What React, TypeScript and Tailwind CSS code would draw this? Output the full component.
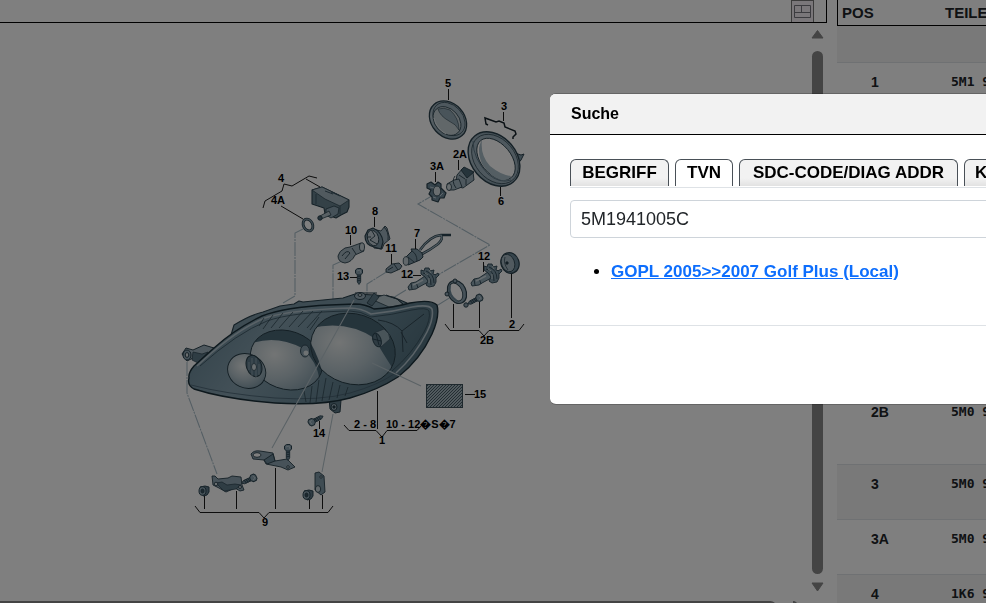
import React from "react";

type Part = { pos: string; code: string; tall?: boolean };

const parts: Part[] = [
  { pos: "1", code: "5M1 941 005 C" },
  { pos: "1", code: "5M1 941 006 C" },
  { pos: "2", code: "5M0 941 607" },
  { pos: "2", code: "5M0 941 608" },
  { pos: "2A", code: "5M0 941 641" },
  { pos: "2A", code: "5M0 941 642" },
  { pos: "2B", code: "5M0 998 225", tall: true },
  { pos: "3", code: "5M0 941 133" },
  { pos: "3A", code: "5M0 941 109" },
  { pos: "4", code: "1K6 941 295" },
];

const labels: [string, number, number][] = [
  ["5", 448, 87], ["3", 504, 110], ["2A", 460, 158], ["3A", 437, 170],
  ["6", 501, 205], ["4", 281, 182], ["4A", 278, 204], ["8", 375, 215],
  ["10", 351, 234], ["7", 417, 237], ["11", 391, 252], ["12", 407, 278],
  ["12", 484, 260], ["13", 343, 280], ["2", 512, 328], ["2B", 487, 344],
  ["15", 480, 398], ["14", 319, 437], ["1", 382, 444], ["9", 265, 526],
];

function Bulb({ x, y }: { x: number; y: number }) {
  return (
    <g transform={`translate(${x} ${y})`} stroke="#2c4552" strokeWidth="0.9" strokeLinejoin="round">
      <path d="M-17 8 L-14 4 L-9 3 L0 -3 L5 2 L-6 8 L-9 10 L-16 11 Z" fill="#93aab7" />
      <path d="M-14 4 L-13 10 M-9 3 L-7 9" fill="none" />
      <path d="M-12 6 L-2 1" stroke="#cddade" strokeWidth="1.4" />
      <path d="M-4 -5 L-4 -9 L-1 -8 L0 -11 L4 -11 L5 -8 L9 -9 L8 -5 L11 -4 L11 3 L9 7 L4 8 L1 6 L3 2 L0 -2 Z" fill="#7b94a2" />
      <path d="M-2 -6 Q6 -5 6 6 M1 -8 Q9 -5 9 4" fill="none" />
      <path d="M10 -4 L13 -6 L14 -4 L11 -1" fill="#7b94a2" />
      <path d="M0 -6 L3 -4 M4 -9 L6 -6 M4 -1 L4 4" stroke="#cddade" />
    </g>
  );
}

function Screw({ x, y, angle }: { x: number; y: number; angle: number }) {
  return (
    <g transform={`translate(${x} ${y}) rotate(${angle})`} stroke="#2c4552">
      <path d="M-1.700 2 H1.700 V10 L0 12.500 L-1.700 10 Z" fill="#6d8797" strokeWidth="0.8" />
      <path d="M-2 5 L2 4 M-2 7 L2 6 M-2 9 L2 8" strokeWidth="0.9" />
      <path d="M-3.500 -2 L-1.500 -3.500 L2 -3.500 L3.500 -2 L3.500 1 L1.500 3 L-1.500 3 L-3.500 1 Z" fill="#8aa2b0" />
      <path d="M-2 -1 L1 -2 L2 1" fill="none" stroke="#c4d3da" strokeWidth="0.8" />
    </g>
  );
}

function Nut({ x, y }: { x: number; y: number }) {
  return (
    <g transform={`translate(${x} ${y})`} stroke="#2c4552">
      <path d="M-4 -4 L1 -5 L5 -4 L5 1 L3 4 L-1 5 Z" fill="#5f7888" />
      <ellipse cx="-1.500" cy="0" rx="3.500" ry="4.300" fill="#8ea5b2" />
      <ellipse cx="-1.500" cy="0" rx="1.500" ry="2" fill="#3a525f" />
    </g>
  );
}

function Diagram() {
  return (
    <svg
      className="block h-[460px] w-[360px] shrink-0"
      viewBox="180 70 360 460"
      role="img"
      aria-label="Headlamp parts"
    >
      <defs>
        <linearGradient id="body" x1="0" y1="0" x2="1" y2="0.3">
          <stop offset="0" stopColor="#5f7f8f" />
          <stop offset="0.4" stopColor="#86a1af" />
          <stop offset="0.7" stopColor="#6b8a99" />
          <stop offset="1" stopColor="#547280" />
        </linearGradient>
        <radialGradient id="glow" cx="0.36" cy="0.42" r="0.7">
          <stop offset="0" stopColor="#e6eaea" />
          <stop offset="0.5" stopColor="#b7c6cd" />
          <stop offset="1" stopColor="#7d98a6" />
        </radialGradient>
        <linearGradient id="ring" x1="0" y1="0" x2="1" y2="1">
          <stop offset="0" stopColor="#7a94a3" />
          <stop offset="0.5" stopColor="#b6c6ce" />
          <stop offset="1" stopColor="#708b9a" />
        </linearGradient>
        <pattern id="hatch" width="3" height="3" patternUnits="userSpaceOnUse">
          <rect width="3" height="3" fill="#a3b4bd" />
          <path d="M-1 1 L1 -1 M0 3 L3 0 M2 4 L4 2" stroke="#3c505b" strokeWidth="0.9" />
        </pattern>
        <clipPath id="bigClip"><ellipse cx="353" cy="349" rx="43" ry="35" transform="rotate(18 353 349)" /></clipPath>
        <clipPath id="midClip"><ellipse cx="286.500" cy="360" rx="37" ry="29" transform="rotate(20 286.500 360)" /></clipPath>
      </defs>

      {/* construction lines */}
      <g fill="none" stroke="#a9bdc8" strokeWidth="1.1" strokeDasharray="14 1 2 1">
        <path d="M303 229 L295 233 V296 L283 303" />
        <path d="M342 261 L333 265 V300" />
        <path d="M388 271 L367 284 V299" />
        <path d="M437 193 L418 204 L490 245 L438 275" />
        <path d="M406 290 L393 298 M438 305 L459 292" />
        <path d="M187 362 V393 L217 474" />
      </g>

      {/* rear housing and brackets */}
      <g stroke="#2a414d" strokeLinejoin="round">
        <path d="M214 348 L204 345 L193 350 L186 348 L182 354 L187 361 L193 358 L201 362 L214 355 Z" fill="#9db1bc" />
        <path d="M193 352 L202 354 L208 352 L198 363 L192 360 Z" fill="#5f7a89" strokeWidth="0.7" />
        <ellipse cx="187" cy="355" rx="4" ry="5" fill="#8aa2b0" />
        <ellipse cx="187" cy="355" rx="1.800" ry="2.400" fill="#d5dde0" />
        <path d="M231 335 L234 325 Q250 315 263 312 L280 306 L294 304 L299 301 L303 302 L343 298 L355 294 L375 295 L393 297 L407 303 L400 320 L260 340 Z" fill="#7b96a4" strokeWidth="1.100" />
        <path d="M371 299 L384 295 L397 299 L404 305 L389 307 Z" fill="#b9c8cf" strokeWidth="0.8" />
        <path d="M386 295 L397 299 L403 304" fill="none" />
        <path d="M367 303 L374 293 L379 297 L372 306 Z" fill="#5f7a89" strokeWidth="0.8" />
        <path d="M355 293 H377" />
        <ellipse cx="360" cy="296" rx="5.500" ry="3.500" fill="#9fb3be" />
        <ellipse cx="360" cy="295" rx="2" ry="1.400" fill="#d5dde0" />
        <path d="M329 398 L330 409 L335 413 L340 412 L341 400 Z" fill="#5f7a89" />
        <ellipse cx="334" cy="407" rx="3" ry="3.500" fill="#9fb3be" />
        <circle cx="334" cy="407" r="1.200" fill="#20343f" />
      </g>

      {/* lens */}
      <path
        d="M189 378 Q188 373 194 366 L214 348 Q235 329 262 316 Q285 307 330 305 L355 304 Q365 304 374 309 Q392 308 410 303 Q431 299 437 305 Q440 316 432 334 Q420 360 398 377 Q378 390 350 398 Q320 406 275 403 Q225 399 194 389 Q187 385 189 378 Z"
        fill="url(#body)" stroke="#1b303a" strokeWidth="1.400"
      />
      <path d="M197 366 Q235 330 265 318 Q290 310 350 308 Q361 308 371 314 Q392 312 412 307 Q429 304 432 309 Q434 318 427 332 Q415 356 396 373" fill="none" stroke="#b4c5ce" strokeWidth="1.600" />
      <path d="M200 366 Q237 333 267 321 Q292 312 350 311 Q361 311 371 317 Q392 315 412 310 Q427 307 429 311 Q431 319 424 332 Q412 354 392 371" fill="none" stroke="#344d5a" strokeWidth="0.8" />
      <path d="M191 385 Q225 394 275 398 Q320 401 350 393 Q378 385 394 374" fill="none" stroke="#466070" strokeWidth="0.8" />
      <g stroke="#324a56" strokeWidth="0.8">
        <path d="M264 318 L259 326 M273 315 L263 329 M283 313 L271 328 M293 312 L279 328 M303 311 L289 327 M313 311 L298 327 M322 311 L307 328 M319 317 L310 330" />
        <path d="M304 391 L306 402 M312 386 L310 403 M319 380 L316 402 M326 378 L322 401 M333 382 L329 400 M340 385 L337 398 M348 387 L345 396" />
      </g>
      <path d="M378 320 Q394 322 402 331 L424 314 M402 331 L403 352 M401 332 L407 343" fill="none" stroke="#2c424e" strokeWidth="0.9" />

      <g clipPath="url(#midClip)">
        <rect x="245" y="325" width="82" height="70" fill="url(#glow)" />
        <path d="M245 346 Q273 333 302 348 Q317 361 320 381 L336 360 L300 320 L250 320 Z" fill="#4b6877" />
      </g>
      <ellipse cx="286.500" cy="360" rx="37" ry="29" transform="rotate(20 286.500 360)" fill="none" stroke="#263c47" strokeWidth="0.9" />
      <g clipPath="url(#bigClip)">
        <rect x="305" y="308" width="95" height="82" fill="url(#glow)" />
        <path d="M308 329 Q345 319 374 338 Q382 352 395 372 L406 350 L385 310 L320 305 Z" fill="#4b6877" />
        <path d="M306 336 Q319 354 324 380 L300 370 Z" fill="#425d6b" />
      </g>
      <ellipse cx="353" cy="349" rx="43" ry="35" transform="rotate(18 353 349)" fill="none" stroke="#263c47" strokeWidth="0.9" />
      <ellipse cx="246.700" cy="371" rx="19.500" ry="17" transform="rotate(25 246.700 371)" fill="url(#glow)" stroke="#263c47" strokeWidth="0.9" />
      <ellipse cx="254" cy="366" rx="7.500" ry="11" transform="rotate(-20 254 366)" fill="#5d7988" stroke="#263c47" />
      <path d="M249 362 V370 M252 358 V376 M256 358 V377 M259 364 V375" stroke="#9db1bc" strokeWidth="0.8" />
      <ellipse cx="254" cy="367" rx="2.500" ry="3.500" fill="#d3dde1" stroke="#2c4552" strokeWidth="0.8" />
      <ellipse cx="305" cy="351" rx="4.500" ry="6" fill="#879fac" stroke="#2c4552" strokeWidth="0.9" />
      <circle cx="306" cy="353" r="2.500" fill="#dde4e6" />
      <path d="M374 333 L384 329 Q390 333 390 339 L381 347 Z" fill="#93a8b3" stroke="#3d5664" strokeWidth="0.8" />
      <ellipse cx="377" cy="340" rx="4" ry="7" transform="rotate(-20 377 340)" fill="#5c7685" stroke="#2c4552" />
      <path d="M376 334 L379 345 M373 339 L381 341" stroke="#2c4552" />
      <path d="M372 363 L421 386" stroke="#b7c5cc" strokeWidth="1.200" />
      <path d="M354 300 L272 448 M333 414 L322 472" stroke="#b7c5cc" strokeWidth="1.100" />

      {/* 5: cover ring */}
      <g stroke="#2a414d">
        <ellipse cx="448" cy="120" rx="21" ry="16.500" transform="rotate(48 448 120)" fill="url(#ring)" strokeWidth="1.300" />
        <ellipse cx="449" cy="119" rx="18.500" ry="13.800" transform="rotate(48 449 119)" fill="#9db1bc" strokeWidth="0.7" />
        <ellipse cx="447" cy="121" rx="16" ry="12" transform="rotate(48 447 121)" fill="#c3ced3" strokeWidth="0.8" />
        <path d="M438 109 Q444 107 450 110 Q459 118 459 130 Q456 124 449 121 Q440 116 438 109 Z" fill="#93a9b5" strokeWidth="0.6" />
        <path d="M434 118 Q436 128 446 134" fill="none" stroke="#e2e9ec" />
      </g>
      {/* 6: large ring */}
      <g stroke="#2a414d">
        <path d="M515 153 L521 155 L524 154 L521 160 L516 166 Z" fill="#7f98a6" />
        <ellipse cx="494" cy="159" rx="30" ry="22.500" transform="rotate(50 494 159)" fill="url(#ring)" strokeWidth="1.400" />
        <ellipse cx="495" cy="159" rx="27.500" ry="20" transform="rotate(50 495 159)" fill="#9db1bc" strokeWidth="0.7" />
        <path d="M473 141 Q473 159 488 174 Q500 184 511 180" fill="none" stroke="#5d7786" />
        <ellipse cx="496" cy="159" rx="24" ry="15" transform="rotate(50 496 159)" fill="#fff" strokeWidth="0.9" />
        <path d="M482 140 Q480 155 490 166 Q501 175 511 176 Q509 181 501 180 Q490 177 482 164 Q476 149 482 140 Z" fill="#a9bcc6" stroke="none" />
      </g>
      {/* 3: wire clip */}
      <path d="M488 125 L486 124 L485 118 L496 122 L499 121 L504 123 L505 127 L515 131 L516 134 L513 137 V139" fill="none" stroke="#16232a" strokeWidth="1.500" />

      {/* 2A and 3A */}
      <g stroke="#2a414d" strokeLinejoin="round" strokeWidth="0.9">
        <path d="M457 175 L463 168 L473 172 L474 180 L463 188 L455 186 Z" fill="#9db1bc" />
        <path d="M461 170 L464 167 L474 172 L467 178 Z" fill="#4d6876" />
        <path d="M447 184 L454 180 L459 179 L462 187 L454 190 L449 190 Z" fill="#a3b7c1" />
        <ellipse cx="449" cy="187" rx="2.500" ry="3.500" fill="#d3dde1" />
        <path d="M455 176 Q451 181 456 188 M466 179 V185 M459 175 L465 179" fill="none" />
        <path d="M427 184 L431 182 L435 185 L438 182 L441 184 L441 188 L446 193 L444 198 L440 198 L438 202 L432 200 L432 197 L429 194 L431 190 L427 188 Z" fill="#6d8998" strokeWidth="1.200" />
        <ellipse cx="437" cy="191" rx="3.800" ry="5" fill="#d3dde1" />
        <path d="M430 187 L434 188 M440 196 L443 193 M433 197 L436 198" stroke="#c4d3da" />
      </g>

      {/* 4: motor */}
      <g stroke="#2a414d" strokeLinejoin="round">
        <path d="M312 190 L322 187 L349 200 V207 L347 212 L341 215 L336 218 L325 214 L324 208 L312 204 Z" fill="#69838f" strokeWidth="1.100" />
        <path d="M312 190 L322 187 L349 200 L340 206 L325 199 Z" fill="#a3b5be" strokeWidth="0.7" />
        <path d="M340 206 V214 M316 194 V204 M325 191 L333 194 M331 192 L340 196" fill="none" stroke="#3d5664" />
        <path d="M326 209 L334 206 L339 208 L338 214 L331 218 L326 215 Z" fill="#8aa2b0" strokeWidth="0.8" />
        <path d="M320 216 L329 211 L331 215 L321 219 Z" fill="#b0c0c8" strokeWidth="0.8" />
        <circle cx="320" cy="218" r="2.200" fill="#4d6876" />
        <ellipse cx="308" cy="225" rx="4.600" ry="6.200" transform="rotate(-25 308 225)" fill="none" strokeWidth="2.800" />
        <ellipse cx="308" cy="225" rx="4.600" ry="6.200" transform="rotate(-25 308 225)" fill="none" stroke="#7f98a6" strokeWidth="1.200" />
      </g>

      {/* 8, 10, 11 */}
      <g stroke="#2a414d" strokeLinejoin="round" strokeWidth="0.9">
        <path d="M372 229 L381 231 L385 226 L387 228 L390 239 L384 244 L382 249 L374 248 Z" fill="#9db1bc" />
        <path d="M384 227 Q389 232 388 240" fill="none" />
        <path d="M368 230 L373 228 Q382 232 383 242 L381 249 L374 247 Q365 245 365 236 Z" fill="#7f98a6" strokeWidth="1.200" />
        <ellipse cx="373" cy="238" rx="5.500" ry="8" transform="rotate(-18 373 238)" fill="#c0cdd4" />
        <path d="M372 231 L375 236 L370 240 L377 244 M367 237 H371" fill="none" />
        <path d="M350 247 L361 243 L364 251 L355 255 Q352 262 345 263 Q338 262 338 256 Q339 251 345 248 Z" fill="#a3b5be" />
        <ellipse cx="362" cy="247" rx="2.500" ry="4.200" fill="#c9d4d9" />
        <path d="M342 256 Q347 249 350 253 M345 259 L350 253 M352 248 L356 254" fill="none" />
        <path d="M386 269 L392 264 L399 263 L402 266 L400 269 L391 273 L386 272 Z" fill="#8ea5b2" />
        <path d="M388 270 L393 267 M394 264 L398 270" />
      </g>

      {/* 7: socket with cable */}
      <path d="M420 250 Q430 236 441 235 Q444 238 438 244 Q430 250 422 254 M441 235 L451 235" fill="none" stroke="#2c4552" strokeWidth="2.600" />
      <path d="M420 250 Q430 236 441 235 Q444 238 438 244 Q430 250 422 254" fill="none" stroke="#9db1bc" strokeWidth="1.200" />
      <path d="M405 258 L412 251 L411 249 L417 249 L422 253 L423 257 L420 260 L408 265 Z" fill="#7f98a6" stroke="#2a414d" />
      <ellipse cx="406" cy="261" rx="2.800" ry="4.300" fill="#c4d0d6" stroke="#2a414d" strokeWidth="0.8" />
      <path d="M412 251 Q417 254 417 261 M408 257 L414 262" fill="none" stroke="#2a414d" strokeWidth="0.8" />

      <Bulb x={425} y={279} />
      <Bulb x={488} y={275} />

      {/* 2 and 2B */}
      <g stroke="#2a414d">
        <ellipse cx="510" cy="263" rx="9" ry="10.500" transform="rotate(-20 510 263)" fill="#6d8998" strokeWidth="1.200" />
        <ellipse cx="508" cy="263" rx="6.500" ry="9" transform="rotate(-20 508 263)" fill="#a3b5be" strokeWidth="0.8" />
        <path d="M505 257 Q503 263 508 270" fill="none" strokeWidth="0.7" />
        <circle cx="507" cy="263" r="1.200" fill="#243942" />
        <ellipse cx="457" cy="292" rx="9" ry="12" transform="rotate(-26 457 292)" fill="#8ea5b2" strokeWidth="1.200" />
        <ellipse cx="456" cy="292" rx="6" ry="9.500" transform="rotate(-26 456 292)" fill="#fff" strokeWidth="0.9" />
        <path d="M450 285 Q448 295 457 301" fill="none" stroke="#6d8998" strokeWidth="2" />
        <circle cx="455" cy="281" r="2" fill="#8ea5b2" />
        <circle cx="447" cy="294" r="2" fill="#8ea5b2" />
        <circle cx="466" cy="305" r="2.200" fill="#8ea5b2" />
      </g>
      <Screw x={479} y={298} angle={62} />
      <Screw x={359} y={272} angle={0} />
      <Screw x={312} y={422} angle={-118} />

      <rect x="426.500" y="384.500" width="36" height="23" fill="url(#hatch)" stroke="#3c505b" />

      {/* 9: repair kit */}
      <g stroke="#2a414d" strokeLinejoin="round" fill="#8ea5b2" strokeWidth="0.9">
        <path d="M212 476 L215 476 L218 479 L228 478 L232 476 L241 477 L242 485 L244 490 L240 491 L235 488 L226 492 L219 488 L213 485 Z" />
        <path d="M216 483 L222 482 L227 485 L235 484 L241 485 L236 489 L224 491 Z" fill="#5f7a89" strokeWidth="0.7" />
        <circle cx="216" cy="484" r="1.800" fill="#d3dde1" />
        <circle cx="240" cy="487" r="1.500" fill="#d3dde1" />
        <path d="M251 454 Q254 450 260 451 L273 453 L275 461 L287 459 L295 467 L288 470 L281 467 L266 464 L264 460 L253 459 Z" />
        <path d="M264 460 L273 454 L275 461 L267 464 Z" fill="#6d8998" />
        <ellipse cx="257" cy="455" rx="4" ry="2.300" fill="#fff" />
        <circle cx="288" cy="467" r="1.300" fill="#d3dde1" />
        <path d="M315 473 L319 472 L324 476 L325 492 L321 495 L315 490 Z" fill="#7f98a6" />
        <ellipse cx="318" cy="489" rx="2.700" ry="3.400" fill="#c4d0d6" />
        <circle cx="321" cy="477" r="1.200" fill="#d3dde1" />
      </g>
      <Nut x={204} y={491} />
      <Nut x={308} y={495} />
      <Screw x={253} y={478} angle={65} />
      <Screw x={288} y={448} angle={0} />

      {/* leader lines */}
      <g fill="none" stroke="#1a1a1a" strokeWidth="1">
        <path d="M448.500 89 V100 M503.500 112 V121 M458.500 160 V170 M435.500 172 V182 M500.500 187 V196" />
        <path d="M263 208 L265 201 L282 191 L284 184 L292 186 L309 176 L317 178 M306 179 L320 187 M281 206 L303 219" />
        <path d="M374.500 217 V227 M350.500 235 V245 M391.500 254 V264 M415.500 239 V249 M350 277.500 H357 M413 275.500 H421 M483.500 262 V272" />
        <path d="M511.500 274 V318 M453.500 304 V328 M479.500 302 V328 M445 324 L450 330.500 H479 L484 336 L489 330.500 H519 L524 324" />
        <path d="M465 394.500 H475 M319.500 421 V429" />
        <path d="M377.500 391 V429 M344 425 L349 430.500 H376 L382 437 L387 430.500 H417 L421 426" />
        <path d="M204.500 496 V509 M236.500 491 V509 M275.500 468 V509 M309.500 500 V509 M322.500 495 V509 M195 506 L200 512.500 H259 L264 518 L269 512.500 H328 L333 506" />
      </g>

      <g className="font-['Liberation_Sans',Arial,sans-serif] text-[11px] font-bold" fill="#000">
        {labels.map(([text, x, y], i) => (
          <text key={i} x={x} y={y} textAnchor="middle">{text}</text>
        ))}
        <text x="354" y="428">2 - 8</text>
        <text x="386" y="428">10 - 12�S�7</text>
      </g>
    </svg>
  );
}

const tab = "h-[27px] shrink-0 rounded-t-md border border-b-0 border-[#495057] px-[10px] text-[17px] leading-[26px] font-bold";
const idle = "bg-linear-to-b from-[#f2f2f2] from-70% to-[#e2e2e2]";

export default function App() {
  return (
    <div className="relative h-screen overflow-hidden bg-white font-['Liberation_Sans',Arial,sans-serif] text-black">
      <div className="grid h-full grid-cols-[minmax(0,1fr)_149px] gap-[10px]">
        <main className="flex min-w-0 flex-col overflow-hidden">
          <div className="flex h-[23px] shrink-0 justify-end border-r border-b border-black pr-3">
            <button type="button" aria-label="Layout" className="flex h-[22px] w-[23px] items-center justify-center border border-b-0 border-[#777] bg-[#f4eef4]">
              <svg width="17" height="13" viewBox="0 0 17 13" fill="none" stroke="#77777f" strokeWidth="1">
                <path d="M0.500 0.500 H16.500 V12.500 H0.500 Z M0.500 7.500 H16.500 M7.500 0.500 V7.500" />
              </svg>
            </button>
          </div>
          <div className="flex min-h-0 flex-1">
            <div className="min-w-0 flex-1 overflow-hidden pt-[47px] pl-[180px]">
              <Diagram />
            </div>
            <div className="mr-[3px] flex w-[13px] shrink-0 flex-col items-center pt-[7px] pb-[9px]">
              <svg className="shrink-0" width="13" height="9" viewBox="0 0 13 9"><path d="M6.500 0.500 L12 8 H1 Z" fill="#888" stroke="#888" strokeLinejoin="round" /></svg>
              <div className="mt-3 mb-2 w-[11px] flex-1 rounded-full bg-[#888]" />
              <svg className="shrink-0" width="13" height="10" viewBox="0 0 13 10"><path d="M6.500 9 L12 1 H1 Z" fill="#888" stroke="#888" strokeLinejoin="round" /></svg>
            </div>
          </div>
          <div className="flex h-[2px] shrink-0 justify-between overflow-hidden pr-[29px]">
            <div className="mr-[17px] h-[11px] flex-1 rounded-r-full bg-[#888]" />
            <div className="h-[11px] w-[5px] rounded-tr-full bg-[#888]" />
          </div>
        </main>

        <aside className="overflow-hidden">
          <table className="w-[420px] table-fixed border-separate border-spacing-0 text-left">
            <thead>
              <tr className="h-[26px] text-[15px] leading-5 text-[#212529]">
                <th className="w-[108px] border-b border-l border-black pl-1">POS</th>
                <th className="border-b border-black">TEILENUMMER</th>
              </tr>
            </thead>
            <tbody className="text-[14px] leading-5 font-bold text-[#212529]">
              <tr className="h-[37px] bg-[#f2f2f2]">
                <td className="border-b border-[#dee2e6]" />
                <td className="border-b border-[#dee2e6]" />
              </tr>
              {parts.map((p, i) => (
                <tr key={i} className={`align-top ${p.tall ? "h-[72px]" : "h-[55px]"} ${i % 2 ? "bg-[#f2f2f2]" : "bg-white"}`}>
                  <td className="border-b border-[#dee2e6] pt-[9px] pl-[34px]">{p.pos}</td>
                  <td className="border-b border-[#dee2e6] pt-[9px] pl-[6px] font-['DejaVu_Sans_Mono',monospace] text-[13px] whitespace-nowrap">{p.code}</td>
                </tr>
              ))}
            </tbody>
          </table>
        </aside>
      </div>

      <div className="fixed inset-0 bg-black/50" />

      <section role="dialog" aria-labelledby="dialog-title" className="absolute top-[93px] left-[550px] w-[800px] overflow-hidden rounded-md border border-l-0 border-black/20 bg-white bg-clip-padding">
        <header className="border-b border-black bg-[#f2f2f2] px-[21px] py-2">
          <h2 id="dialog-title" className="text-[16px] leading-6 font-bold">Suche</h2>
        </header>
        <div className="px-5 pt-6 pb-10">
          <div role="tablist" className="flex gap-[6px] border-b border-[#dee2e6] pb-px whitespace-nowrap">
            <button type="button" role="tab" className={`${tab} ${idle} w-[99px]`}>BEGRIFF</button>
            <button type="button" role="tab" aria-selected="true" className={`${tab} w-[58px] bg-white`}>TVN</button>
            <button type="button" role="tab" className={`${tab} ${idle} w-[219px]`}>SDC-CODE/DIAG ADDR</button>
            <button type="button" role="tab" className={`${tab} ${idle}`}>KATALOG</button>
          </div>
          <input
            aria-label="TVN"
            defaultValue="5M1941005C"
            className="mt-3 block h-[38px] w-full rounded border border-[#ced4da] bg-white px-[10px] text-[18px] text-[#212529]"
          />
          <ul className="mt-[21px] list-disc pl-[41px] text-[17px] leading-[26px]">
            <li>
              <a href="#gopl" className="font-bold text-[#0d6efd] underline">GOPL 2005&gt;&gt;2007 Golf Plus (Local)</a>
            </li>
          </ul>
        </div>
        <footer className="h-[79px] border-t border-[#dee2e6]" />
      </section>
    </div>
  );
}
